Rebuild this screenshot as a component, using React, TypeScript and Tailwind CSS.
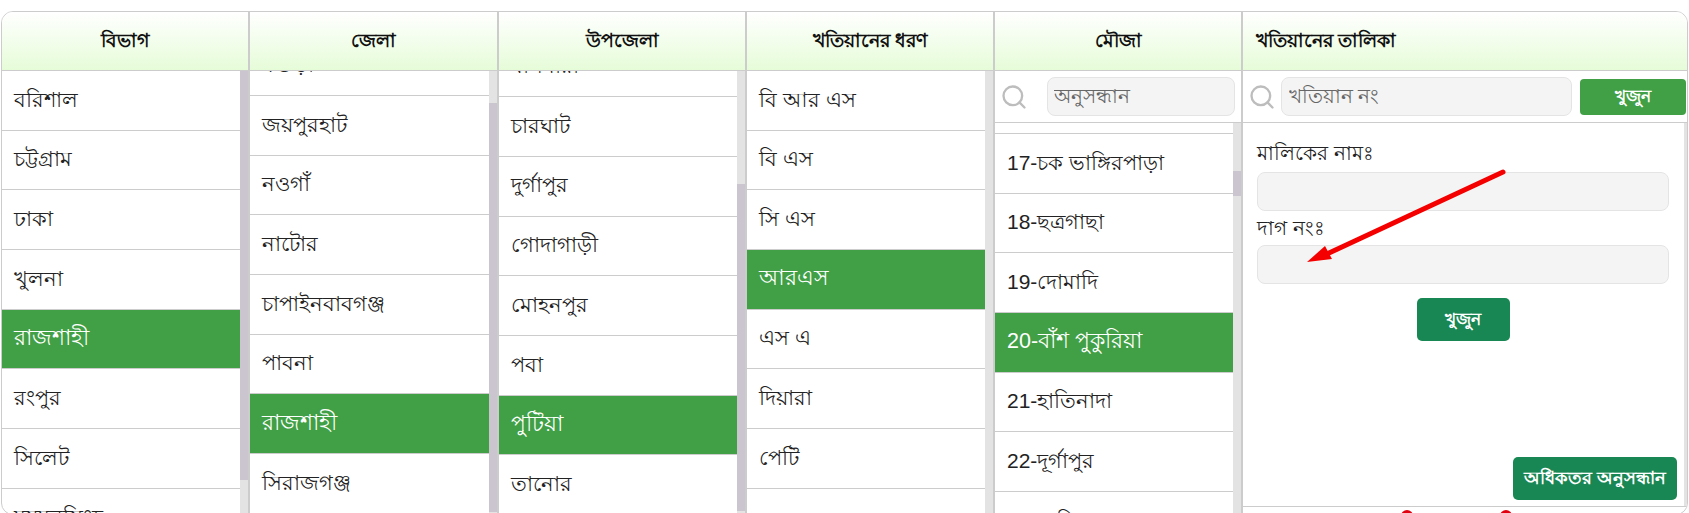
import { Search } from "lucide-react";

type ColumnProps = {
  title: string;
  items: string[];
  selected: string;
  widthClass: string;
  listClass?: string;
  itemClass?: string;
  trackClass: string;
  thumbClass: string;
  search?: boolean;
};

function Header({ title, left }: { title: string; left?: boolean }) {
  return (
    <div
      className={`flex h-[59px] shrink-0 items-center border-b border-[#ccc] bg-gradient-to-b from-white to-[#e6fcd8] text-[18.5px] font-bold text-[#111] ${
        left ? "justify-start pl-[13px]" : "justify-center"
      }`}
    >
      {title}
    </div>
  );
}

function SearchIcon() {
  return <Search className="h-[28px] w-[28px] shrink-0 text-[#bdbdbd]" strokeWidth={2} />;
}

function Column({ title, items, selected, widthClass, listClass = "", itemClass = "pl-[12px]", trackClass, thumbClass, search }: ColumnProps) {
  return (
    <div className={`flex shrink-0 flex-col border-r-2 border-[#ccc] ${widthClass}`}>
      <Header title={title} />
      {search && (
        <div className="flex h-[52px] shrink-0 items-center border-b border-[#ccc] pr-[6px] pl-[5px]">
          <SearchIcon />
          <input
            readOnly
            placeholder="অনুসন্ধান"
            className="ml-[19px] h-[39px] min-w-0 flex-1 rounded-[8px] border border-[#e4e4e4] bg-[#f4f4f4] px-[6px] text-[19.5px] placeholder:text-[#666]"
          />
        </div>
      )}
      <div className="flex min-h-0 flex-1">
        <div className="min-w-0 flex-1 overflow-hidden">
          <div className={listClass}>
            {items.map((item, i) => (
              <div
                key={i}
                className={`flex h-[59.7px] items-center border-b border-[#ccc] pb-[2px] ${itemClass} ${
                  item === selected ? "bg-[#419f45] text-[21.5px] text-white" : "text-[21px] text-[#222]"
                }`}
              >
                {item}
              </div>
            ))}
          </div>
        </div>
        <div className={`w-[8px] shrink-0 bg-[#e3e3e3] ${trackClass}`}>
          <div className={`w-full bg-[#cac5cf] ${thumbClass}`} />
        </div>
      </div>
    </div>
  );
}

export default function App() {
  return (
    <div className="h-[513px] overflow-hidden bg-white [font-family:'Liberation_Sans','Noto_Sans',sans-serif]">
      <div className="mt-[11px] mr-px ml-px flex h-[504px] overflow-hidden rounded-[12px] border border-[#ccc]">
        <Column
          title="বিভাগ"
          widthClass="w-[248px]"
          items={["বরিশাল", "চট্টগ্রাম", "ঢাকা", "খুলনা", "রাজশাহী", "রংপুর", "সিলেট", "ময়মনসিংহ"]}
          selected="রাজশাহী"
          trackClass=""
          thumbClass="h-[409px]"
        />
        <Column
          title="জেলা"
          widthClass="w-[249px]"
          listClass="-mt-[34.7px]"
          items={["বগুড়া", "জয়পুরহাট", "নওগাঁ", "নাটোর", "চাপাইনবাবগঞ্জ", "পাবনা", "রাজশাহী", "সিরাজগঞ্জ"]}
          selected="রাজশাহী"
          trackClass="pt-[32px]"
          thumbClass="h-[409px]"
        />
        <Column
          title="উপজেলা"
          widthClass="w-[248px]"
          listClass="-mt-[33.5px]"
          items={["বাগমারা", "চারঘাট", "দুর্গাপুর", "গোদাগাড়ী", "মোহনপুর", "পবা", "পুটিয়া", "তানোর"]}
          selected="পুটিয়া"
          trackClass="pt-[113px]"
          thumbClass="h-[327px]"
        />
        <Column
          title="খতিয়ানের ধরণ"
          widthClass="w-[248px]"
          items={["বি আর এস", "বি এস", "সি এস", "আরএস", "এস এ", "দিয়ারা", "পেটি", ""]}
          selected="আরএস"
          trackClass=""
          thumbClass="h-0"
        />
        <Column
          title="মৌজা"
          widthClass="w-[248px]"
          listClass="-mt-[48.7px]"
          items={["16-বাজুখলসী", "17-চক ভাঙ্গিরপাড়া", "18-ছত্রগাছা", "19-দোমাদি", "20-বাঁশ পুকুরিয়া", "21-হাতিনাদা", "22-দূর্গাপুর", "23-পালিকান্দা"]}
          selected="20-বাঁশ পুকুরিয়া"
          trackClass="pt-[48px]"
          thumbClass="h-[25px]"
          search
        />
        <div className="relative flex min-w-0 flex-1 flex-col">
          <Header title="খতিয়ানের তালিকা" left />
          <div className="flex h-[52px] shrink-0 items-center border-b border-[#ccc] pr-px pl-[5px]">
            <SearchIcon />
            <input
              readOnly
              placeholder="খতিয়ান নং"
              className="ml-[5px] h-[39px] min-w-0 flex-1 rounded-[8px] border border-[#e4e4e4] bg-[#f4f4f4] px-[7px] text-[19.5px] placeholder:text-[#666]"
            />
            <button className="ml-[8px] h-[36px] w-[106px] shrink-0 rounded-[4px] bg-[#419f45] text-[17px] font-bold text-white">
              খুজুন
            </button>
          </div>
          <div className="flex h-[384px] shrink-0 border-b border-[#ccc]">
            <div className="flex min-w-0 flex-1 flex-col pt-[17px] pr-[15px] pl-[14px]">
              <label className="h-[26px] text-[20px] leading-[26px] text-[#222]">মালিকের নামঃ</label>
              <input readOnly className="mt-[6px] h-[39px] rounded-[8px] border border-[#e4e4e4] bg-[#f4f4f4]" />
              <label className="mt-[4px] h-[26px] text-[20px] leading-[26px] text-[#222]">দাগ নংঃ</label>
              <input readOnly className="mt-[4px] h-[39px] rounded-[8px] border border-[#e4e4e4] bg-[#f4f4f4]" />
              <button className="mt-[14px] h-[43px] w-[93px] self-center rounded-[5px] bg-[#198754] text-[17px] font-bold text-white">
                খুজুন
              </button>
              <button className="-mr-[8px] mt-auto mb-[6px] h-[43px] w-[164px] self-end rounded-[5px] bg-[#198754] text-[17.5px] font-bold text-white">
                অধিকতর অনুসন্ধান
              </button>
            </div>
            <div className="w-[3px] shrink-0 bg-[#e3e3e3]" />
          </div>
          <div className="flex gap-[87px] pt-[3px] pl-[158px]">
            <div className="h-[12px] w-[12px] rounded-full bg-[#e1000f]" />
            <div className="h-[12px] w-[12px] rounded-full bg-[#e1000f]" />
          </div>
          <svg
            className="pointer-events-none absolute top-[149px] left-[54px] h-[110px] w-[220px]"
            viewBox="0 0 220 110"
            fill="none"
          >
            <line x1="206" y1="11" x2="32" y2="92" stroke="#f50000" strokeWidth="5" strokeLinecap="round" />
            <polygon points="10,101 28,85 35,98" fill="#f50000" />
          </svg>
        </div>
      </div>
    </div>
  );
}
